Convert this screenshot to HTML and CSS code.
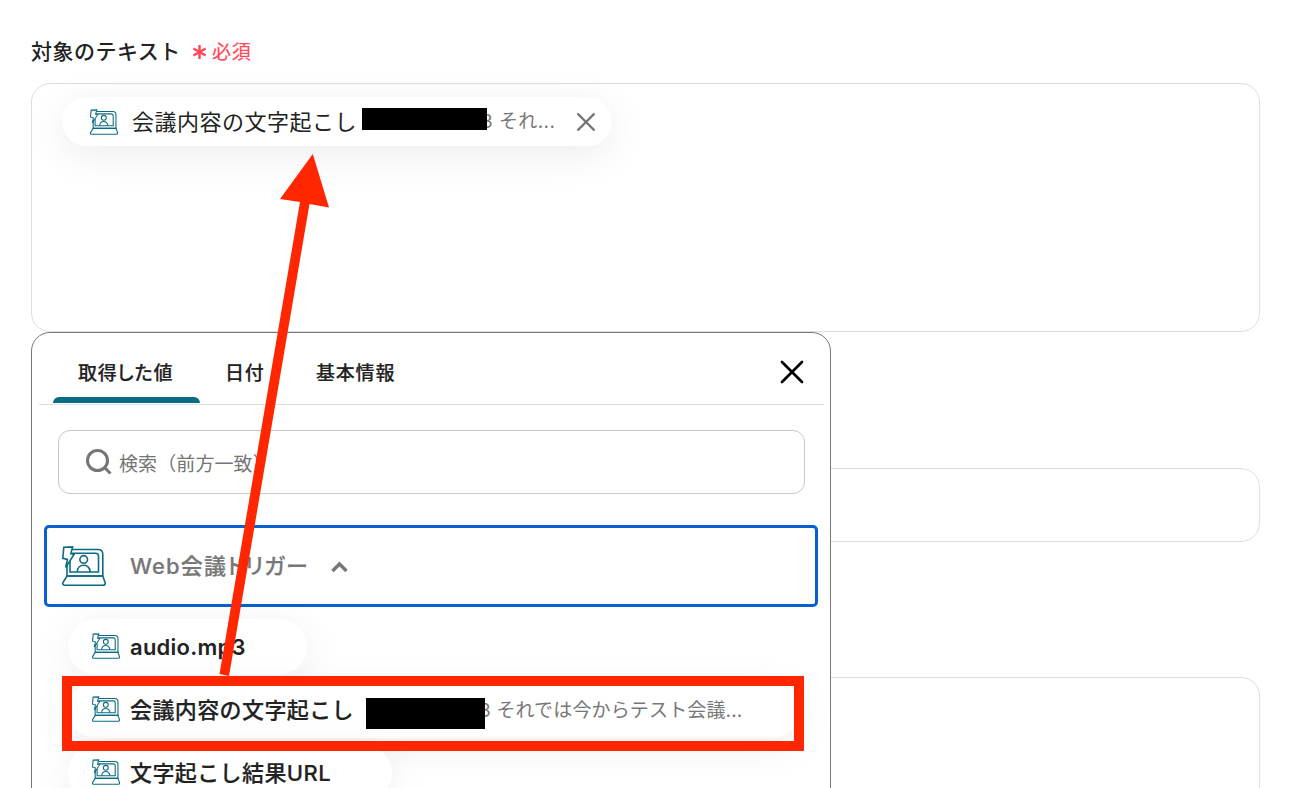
FILE: index.html
```html
<!DOCTYPE html>
<html lang="ja">
<head>
    <meta charset="UTF-8">
    <meta name="viewport" content="width=device-width, initial-scale=1.0">
    <title>対象のテキスト</title>
    <link rel="stylesheet" href="styles.css">
</head>
<body>
    <svg class="defs">
        <symbol id="meeting" viewBox="0 0 44 40">
            <path d="M10 3.5H36Q40.8 3.5 40.8 8.5V30H5V19"/>
            <path d="M10 7.2H33.5Q36.5 7.2 36.5 10V26H8V15"/>
            <circle cx="21.7" cy="13.4" r="3.8"/>
            <path d="M15.3 26C15.3 17 28.1 17 28.1 26"/>
            <path d="M5 30H40.8L43.2 36.800Q43.400 39.200 41 39.200H2.800Q.400 39.200.800 36.800Z"/>
            <path class="bolt" d="M1.8 1.300L10.600.9L8.800 7.600L12 8.500L3.700 21.500L5.400 13.400L.8 12.400Z"/>
        </symbol>
    </svg>

    <div class="form">
        <div class="field-label">
            <span class="label-text">対象のテキスト</span>
            <svg class="asterisk" viewBox="0 0 16 16"><path d="M8 .5V15.500M1.500 4.200L14.500 11.800M14.500 4.200L1.500 11.800"/></svg>
            <span class="required">必須</span>
        </div>
        <div class="field field-main">
            <div class="chip">
                <svg class="icon-small"><use href="#meeting"/></svg>
                <span class="chip-name">会議内容の文字起こし</span>
                <span class="mask"></span>
                <span class="chip-value"><span class="cut">3</span> それ...</span>
                <svg class="chip-close" viewBox="0 0 20 20"><path d="M1.5 1.5L18.5 18.5M18.5 1.5L1.5 18.5"/></svg>
            </div>
        </div>
        <div class="field field-single"></div>
        <div class="field field-last"></div>
    </div>

    <div class="popup">
        <div class="tabs">
            <div class="tab active">取得した値</div>
            <div class="tab">日付</div>
            <div class="tab">基本情報</div>
            <svg class="popup-close" viewBox="0 0 24 24"><path d="M2 2L22 22M22 2L2 22"/></svg>
        </div>
        <div class="search">
            <svg class="search-icon" viewBox="0 0 26 26"><circle cx="11.5" cy="11.5" r="10"/><path d="M19 19L24.5 24.5"/></svg>
            <span>検索（前方一致）</span>
        </div>
        <div class="group">
            <svg class="icon-large"><use href="#meeting"/></svg>
            <span class="group-name">Web会議トリガー</span>
            <svg class="chevron" viewBox="0 0 18 12"><path d="M2 10L9 3L16 10"/></svg>
        </div>
        <div class="items">
            <div class="item item-audio">
                <svg class="icon-small"><use href="#meeting"/></svg>
                <span class="item-name latin">audio.mp3</span>
            </div>
            <div class="item item-text">
                <svg class="icon-small"><use href="#meeting"/></svg>
                <span class="item-name">会議内容の文字起こし</span>
                <span class="mask"></span>
                <span class="item-value"><span class="cut">3</span> それでは今からテスト会議...</span>
            </div>
            <div class="item item-url">
                <svg class="icon-small"><use href="#meeting"/></svg>
                <span class="item-name">文字起こし結果URL</span>
            </div>
        </div>
    </div>

    <div class="highlight"></div>
    <svg class="arrow" viewBox="0 0 1308 788">
        <path d="M312.800 154L280 199L300 202L219.500 674L229 676L309.500 204L329 207.500Z"/>
    </svg>
</body>
</html>
```
FILE: styles.css
```css
* {
    box-sizing: border-box;
}
body {
    position: relative;
    width: 1308px;
    height: 788px;
    margin: 0;
    overflow: hidden;
    background-color: #fff;
    color: #222;
    font-family: Inter, "Noto Sans CJK JP", sans-serif;
}
svg {
    display: block;
    flex: none;
    fill: none;
}
.defs {
    position: absolute;
    width: 0;
    height: 0;
}
.form {
    padding: 32px 48px 0 31px;
}
.field-label {
    display: flex;
    align-items: center;
    height: 40px;
    margin-bottom: 11px;
    white-space: nowrap;
}
.label-text {
    width: 161px;
    padding-bottom: 4px;
    font-size: 21px;
    font-weight: 500;
    letter-spacing: 0.5px;
}
.asterisk {
    width: 15px;
    height: 16px;
    margin-right: 5px;
    stroke: #ff4757;
    stroke-width: 2.6;
}
.required {
    padding-bottom: 4px;
    color: #ff4757;
    font-size: 19px;
    letter-spacing: 0.7px;
    -webkit-text-stroke: 0.2px;
}
.field {
    border: 1px solid #dedfe0;
    border-radius: 19px;
}
.field-main {
    height: 249px;
    padding: 13px 30px;
    margin-bottom: 136px;
}
.field-single {
    height: 74px;
    margin-bottom: 135px;
}
.field-last {
    height: 150px;
}
.chip {
    display: flex;
    align-items: center;
    width: 550px;
    height: 49px;
    padding-left: 28px;
    border-radius: 25px;
    background-color: #fff;
    box-shadow: 0 8px 40px rgba(0, 0, 0, 0.08);
    white-space: nowrap;
}
.icon-small {
    width: 28px;
    height: 26px;
    stroke: #0b6b84;
    stroke-width: 1.7;
}
.item .icon-small {
    margin-bottom: 2px;
}
.bolt {
    fill: #fff;
}
.chip-name {
    width: 230px;
    margin-left: 14px;
    padding-bottom: 4px;
    font-size: 22px;
    letter-spacing: 0.5px;
}
.mask {
    position: relative;
    z-index: 1;
    flex: none;
    background-color: #000;
}
.chip .mask {
    width: 125px;
    height: 22px;
    margin-bottom: 5px;
}
.chip-value {
    width: 89px;
    margin-left: -6px;
    padding-bottom: 4px;
    color: #777;
    font-size: 19px;
    letter-spacing: 0.4px;
}
.chip-close {
    width: 20px;
    height: 20px;
    margin-left: 6px;
    stroke: #737373;
    stroke-width: 2.4;
}
.popup {
    position: absolute;
    top: 332px;
    left: 31px;
    width: 800px;
    height: 480px;
    border: 1px solid #777;
    border-radius: 19px;
    background-color: #fff;
}
.tabs {
    display: flex;
    height: 72px;
    margin: 0 6px 0 7px;
    padding-left: 14px;
    border-bottom: 1px solid #dedfe0;
}
.tab {
    width: 91px;
    height: 70px;
    padding: 26px 0 0 25px;
    font-size: 19px;
    line-height: 29px;
    font-weight: 500;
    font-feature-settings: "palt";
    letter-spacing: 0.8px;
    -webkit-text-stroke: 0.2px;
    white-space: nowrap;
}
.tab.active {
    width: 147px;
    position: relative;
}
.tab.active::after {
    content: "";
    position: absolute;
    bottom: 0;
    left: 0;
    width: 100%;
    height: 6px;
    border-radius: 6px 6px 0 0;
    background-color: #0b6b84;
}
.popup-close {
    width: 24px;
    height: 24px;
    margin: 27px 20px 0 auto;
    stroke: #000;
    stroke-width: 2.7;
    stroke-linecap: round;
}
.search {
    display: flex;
    align-items: center;
    height: 64px;
    margin: 25px 25px 0 26px;
    padding-left: 27px;
    border: 1px solid #c8c8c8;
    border-radius: 12px;
    color: #757575;
    font-size: 19px;
    letter-spacing: 0.1px;
}
.search-icon {
    width: 26px;
    height: 26px;
    margin-right: 7px;
    stroke: #757575;
    stroke-width: 3;
}
.group {
    display: flex;
    align-items: center;
    width: 774px;
    height: 82px;
    margin: 31px 0 0 12px;
    padding-left: 15px;
    border: 3px solid #0860d0;
    border-radius: 5px;
    color: #777;
}
.icon-large {
    width: 44px;
    height: 40px;
    stroke: #0b6b84;
    stroke-width: 1.6;
}
.group-name {
    width: 200px;
    margin-left: 24px;
    padding-bottom: 4px;
    font-size: 22px;
    font-weight: 500;
    font-feature-settings: "palt";
    letter-spacing: 1.1px;
    -webkit-text-stroke: 0.2px;
    white-space: nowrap;
}
.chevron {
    width: 19px;
    height: 12px;
    margin-top: 1px;
    stroke: #777;
    stroke-width: 3.4;
}
.items {
    display: flex;
    flex-direction: column;
    gap: 7px;
    margin: 12px 0 0 36px;
}
.item {
    display: flex;
    align-items: center;
    height: 56px;
    padding-left: 24px;
    border-radius: 28px;
    background-color: #fff;
    box-shadow: 0 8px 40px rgba(0, 0, 0, 0.07);
    white-space: nowrap;
}
.item-audio {
    width: 239px;
}
.item-text {
    width: 732px;
}
.item-url {
    width: 324px;
}
.item-name {
    margin-left: 10px;
    padding-bottom: 5px;
    font-size: 22px;
    font-weight: 500;
    letter-spacing: 0.4px;
    -webkit-text-stroke: 0.2px;
}
.item-name.latin {
    padding-bottom: 0;
    font-weight: 600;
    letter-spacing: 0.25px;
    -webkit-text-stroke: 0;
}
.item-text .item-name {
    width: 236px;
}
.item-text .mask {
    width: 119px;
    height: 31px;
    margin-top: 7px;
}
.item-value {
    margin-left: -6px;
    padding-bottom: 3px;
    color: #777;
    font-size: 19px;
    letter-spacing: 0.15px;
}
.highlight {
    position: absolute;
    top: 676px;
    left: 62px;
    width: 742px;
    height: 75px;
    border: 10px solid #ff2600;
}
.arrow {
    position: absolute;
    top: 0;
    left: 0;
    width: 1308px;
    height: 788px;
    fill: #ff2600;
}
```
